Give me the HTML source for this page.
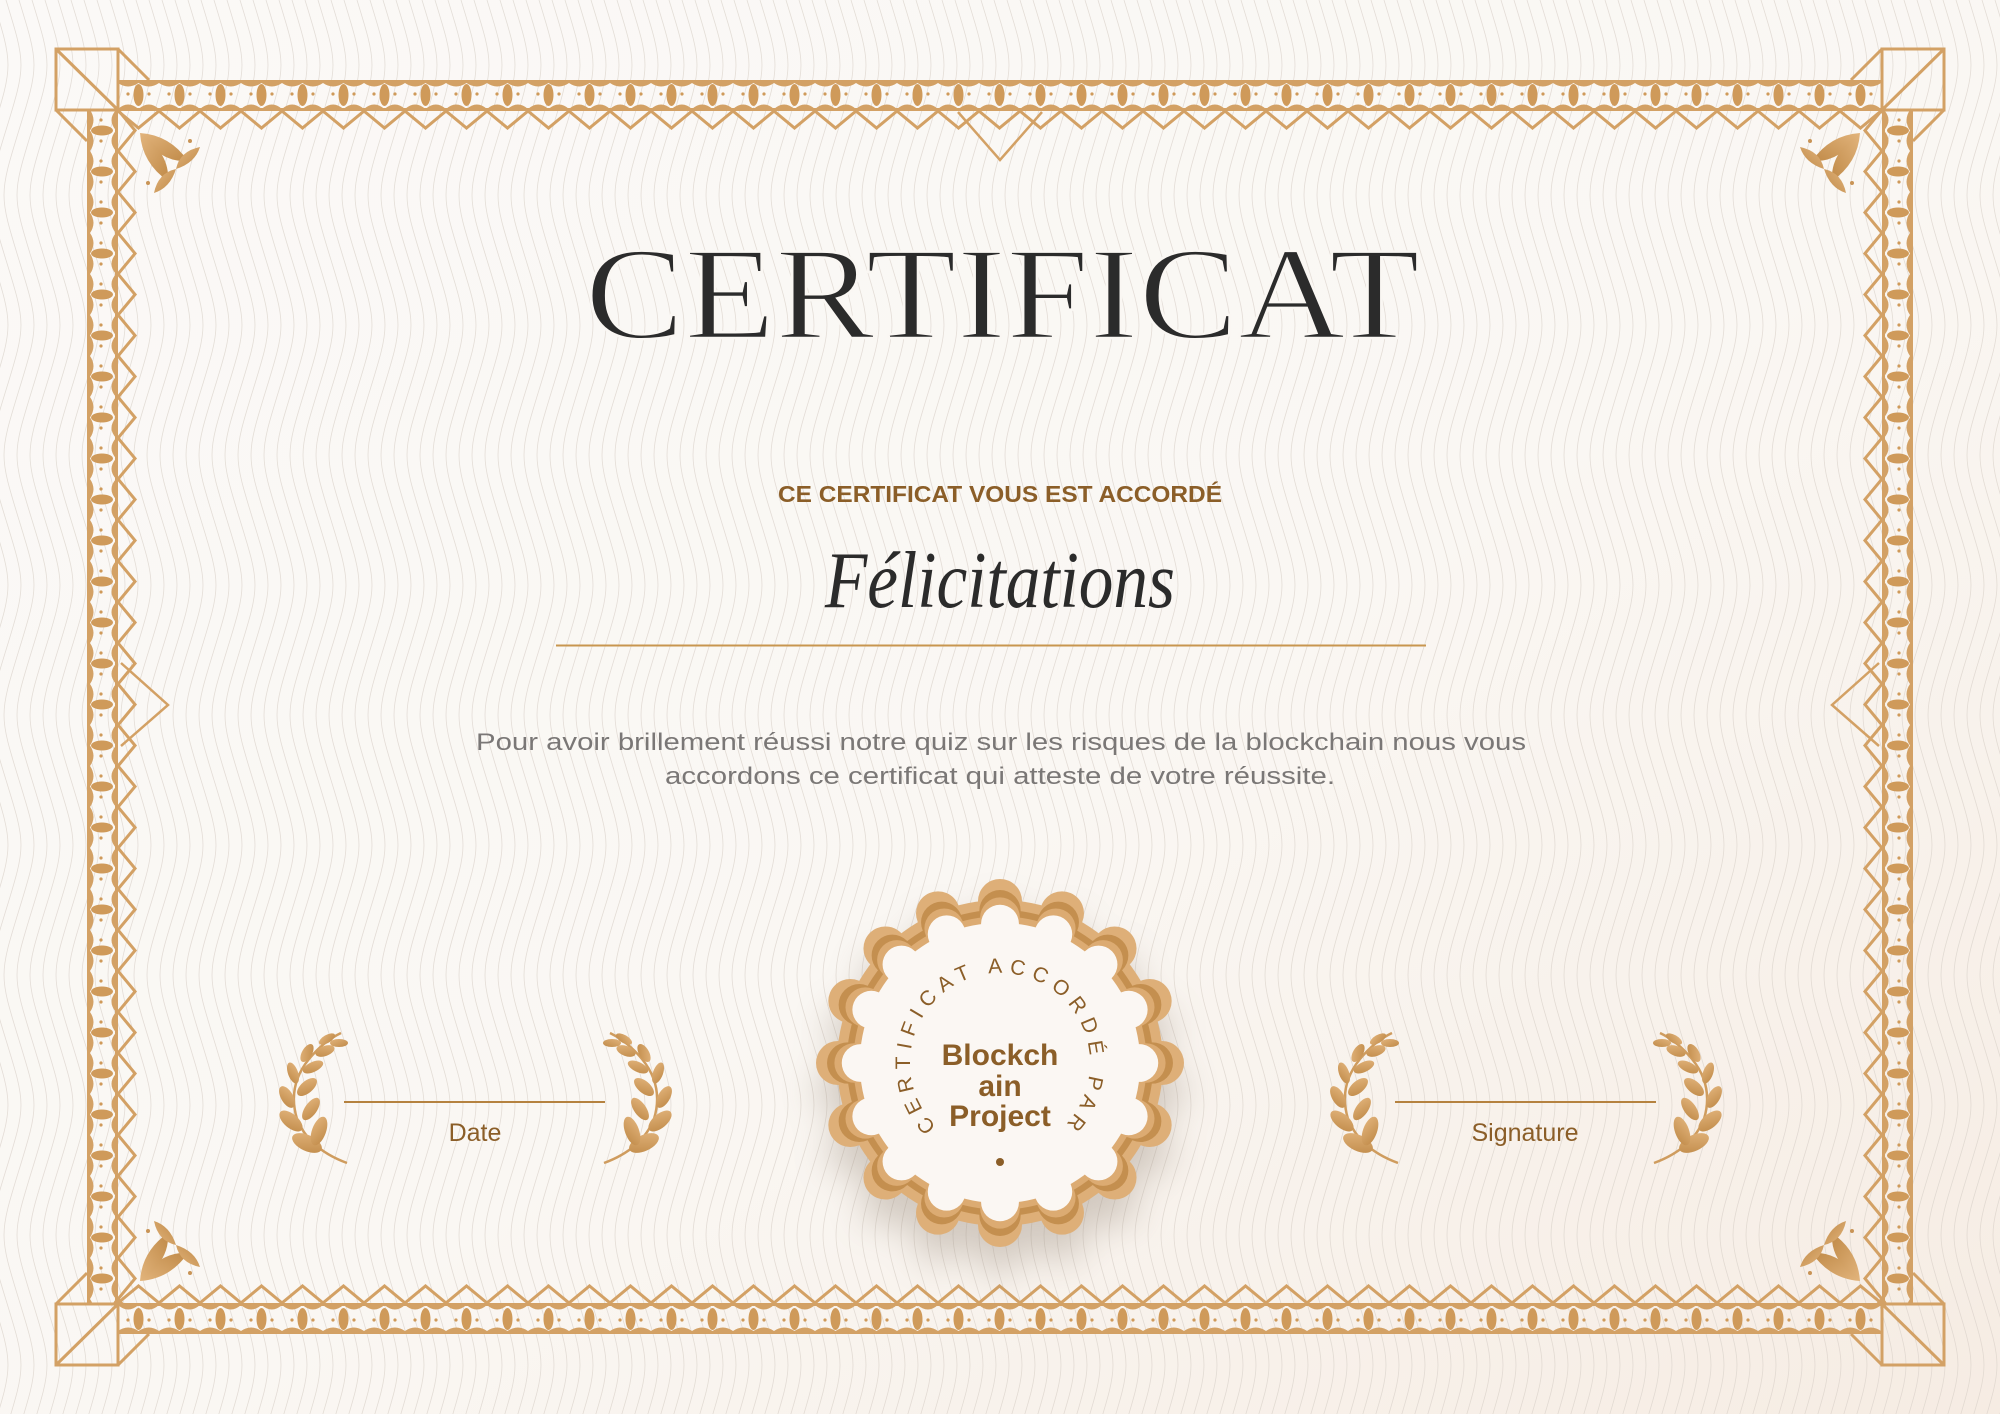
<!DOCTYPE html>
<html><head><meta charset="utf-8">
<style>
html,body{margin:0;padding:0;}
body{width:2000px;height:1414px;overflow:hidden;}
svg{display:block;}
</style></head>
<body>
<svg width="2000" height="1414" viewBox="0 0 2000 1414" xmlns="http://www.w3.org/2000/svg">
<defs>
  <linearGradient id="bg" x1="0" y1="0" x2="1" y2="1">
    <stop offset="0" stop-color="#fbf9f7"/>
    <stop offset="0.55" stop-color="#faf7f3"/>
    <stop offset="1" stop-color="#f6ece3"/>
  </linearGradient>
  <linearGradient id="gold" x1="0" y1="0" x2="1" y2="1">
    <stop offset="0" stop-color="#e2b47c"/>
    <stop offset="1" stop-color="#c08a48"/>
  </linearGradient>
  <pattern id="waves" x="0" y="0" width="13" height="260" patternUnits="userSpaceOnUse">
    <path d="M6,0 C26,65 26,65 6,130 C-14,195 -14,195 6,260" fill="none" stroke="#d9d1c9" stroke-width="0.8"/>
    <path d="M19,0 C39,65 39,65 19,130 C-1,195 -1,195 19,260" fill="none" stroke="#d9d1c9" stroke-width="0.8"/>
    <path d="M-7,0 C13,65 13,65 -7,130 C-27,195 -27,195 -7,260" fill="none" stroke="#d9d1c9" stroke-width="0.8"/>
  </pattern>
  <g id="bandtile">
    <line x1="0" y1="1.5" x2="41" y2="1.5" stroke="#d3a165" stroke-width="3"/>
    <path d="M0,3 Q10,10 20.5,3 Q31,10 41,3 Z" fill="#d3a165"/>
    <line x1="0" y1="29.5" x2="41" y2="29.5" stroke="#d3a165" stroke-width="3"/>
    <path d="M0,29 Q10,20 20.5,29 Q31,20 41,29 Z" fill="#d3a165"/>
    <ellipse cx="20.5" cy="15" rx="5" ry="11" fill="#cf9a5a"/>
    <circle cx="10" cy="14" r="1.6" fill="#cf9a5a"/>
    <circle cx="31" cy="14" r="1.6" fill="#cf9a5a"/>
    <polyline points="0,31 20.5,48 41,31" fill="none" stroke="#d3a165" stroke-width="3"/>
  </g>
  <pattern id="hb" x="0" y="0" width="41" height="50" patternUnits="userSpaceOnUse" patternTransform="translate(118,80)">
    <use href="#bandtile"/>
  </pattern>
  <pattern id="hbb" x="0" y="0" width="41" height="50" patternUnits="userSpaceOnUse" patternTransform="matrix(1,0,0,-1,118,1334)">
    <use href="#bandtile"/>
  </pattern>
  <pattern id="vbl" x="0" y="0" width="41" height="50" patternUnits="userSpaceOnUse" patternTransform="matrix(0,1,1,0,87,110)">
    <use href="#bandtile"/>
  </pattern>
  <pattern id="vbr" x="0" y="0" width="41" height="50" patternUnits="userSpaceOnUse" patternTransform="matrix(0,1,-1,0,1913,110)">
    <use href="#bandtile"/>
  </pattern>
  <g id="fan">
    <path d="M0,0 Q30,2 48,28 Q20,30 0,0 Z" fill="url(#gold)"/>
    <path d="M0,0 Q2,30 28,48 Q30,20 0,0 Z" fill="url(#gold)"/>
    <path d="M60,14 Q40,18 36,36 Q55,30 60,14 Z" fill="url(#gold)"/>
    <path d="M14,60 Q18,40 36,36 Q30,55 14,60 Z" fill="url(#gold)"/>
    <circle cx="50" cy="8" r="2" fill="#c99456"/><circle cx="8" cy="50" r="2" fill="#c99456"/>
  </g>
  <g id="laurel">
    <path d="M68,132 Q30,118 18,88 Q8,55 30,28 Q45,10 62,2" fill="none" stroke="#cf9c5e" stroke-width="2.5"/>
    <g fill="url(#gold)">
      <ellipse cx="28" cy="112" rx="16" ry="8" transform="rotate(25 28 112)"/>
      <ellipse cx="40" cy="100" rx="7" ry="15" transform="rotate(20 40 100)"/>
      <ellipse cx="12" cy="90" rx="14" ry="7" transform="rotate(40 12 90)"/>
      <ellipse cx="32" cy="78" rx="6" ry="13" transform="rotate(35 32 78)"/>
      <ellipse cx="8" cy="66" rx="12" ry="6" transform="rotate(60 8 66)"/>
      <ellipse cx="28" cy="56" rx="6" ry="12" transform="rotate(50 28 56)"/>
      <ellipse cx="14" cy="42" rx="11" ry="5" transform="rotate(70 14 42)"/>
      <ellipse cx="34" cy="36" rx="5" ry="11" transform="rotate(65 34 36)"/>
      <ellipse cx="28" cy="22" rx="10" ry="5" transform="rotate(-60 28 22)"/>
      <ellipse cx="46" cy="20" rx="5" ry="10" transform="rotate(70 46 20)"/>
      <ellipse cx="48" cy="8" rx="9" ry="4" transform="rotate(-30 48 8)"/>
      <ellipse cx="60" cy="12" rx="9" ry="4"/>
    </g>
  </g>
  <g id="bumps">
    <circle cx="0" cy="0" r="163"/>
    <circle cx="162" cy="0" r="22"/>
    <circle cx="162" cy="0" r="22" transform="rotate(22.5)"/>
    <circle cx="162" cy="0" r="22" transform="rotate(45)"/>
    <circle cx="162" cy="0" r="22" transform="rotate(67.5)"/>
    <circle cx="162" cy="0" r="22" transform="rotate(90)"/>
    <circle cx="162" cy="0" r="22" transform="rotate(112.5)"/>
    <circle cx="162" cy="0" r="22" transform="rotate(135)"/>
    <circle cx="162" cy="0" r="22" transform="rotate(157.5)"/>
    <circle cx="162" cy="0" r="22" transform="rotate(180)"/>
    <circle cx="162" cy="0" r="22" transform="rotate(202.5)"/>
    <circle cx="162" cy="0" r="22" transform="rotate(225)"/>
    <circle cx="162" cy="0" r="22" transform="rotate(247.5)"/>
    <circle cx="162" cy="0" r="22" transform="rotate(270)"/>
    <circle cx="162" cy="0" r="22" transform="rotate(292.5)"/>
    <circle cx="162" cy="0" r="22" transform="rotate(315)"/>
    <circle cx="162" cy="0" r="22" transform="rotate(337.5)"/>
  </g>
  <filter id="sh" x="-50%" y="-50%" width="200%" height="200%"><feGaussianBlur stdDeviation="18"/></filter>
  <path id="arc" d="M936.4,1126.6 A90,90 0 1 1 1063.6,1126.6"/>
</defs>

<rect width="2000" height="1414" fill="url(#bg)"/>
<rect width="2000" height="1414" fill="url(#waves)" opacity="0.7"/>

<rect x="118" y="80" width="1764" height="50" fill="url(#hb)"/>
<rect x="118" y="1284" width="1764" height="50" fill="url(#hbb)"/>
<rect x="87" y="110" width="50" height="1194" fill="url(#vbl)"/>
<rect x="1863" y="110" width="50" height="1194" fill="url(#vbr)"/>

<g fill="none" stroke="#d3a165" stroke-width="3">
  <rect x="56" y="49" width="62" height="61"/>
  <line x1="56" y1="49" x2="118" y2="110"/><line x1="118" y1="49" x2="149" y2="80"/><line x1="56" y1="110" x2="87" y2="141"/>
  <rect x="1882" y="49" width="62" height="61"/>
  <line x1="1944" y1="49" x2="1882" y2="110"/><line x1="1882" y1="49" x2="1851" y2="80"/><line x1="1944" y1="110" x2="1913" y2="141"/>
  <rect x="56" y="1304" width="62" height="61"/>
  <line x1="56" y1="1365" x2="118" y2="1304"/><line x1="118" y1="1365" x2="149" y2="1334"/><line x1="56" y1="1304" x2="87" y2="1273"/>
  <rect x="1882" y="1304" width="62" height="61"/>
  <line x1="1944" y1="1365" x2="1882" y2="1304"/><line x1="1882" y1="1365" x2="1851" y2="1334"/><line x1="1944" y1="1304" x2="1913" y2="1273"/>
  <polyline points="958,112 1000,160 1042,112" stroke-width="2.5"/>
  <polyline points="121,663 168,705 121,746" stroke-width="2.5"/>
  <polyline points="1879,663 1832,705 1879,746" stroke-width="2.5"/>
</g>
<use href="#fan" transform="translate(140,133)"/>
<use href="#fan" transform="translate(1860,133) scale(-1,1)"/>
<use href="#fan" transform="translate(140,1281) scale(1,-1)"/>
<use href="#fan" transform="translate(1860,1281) scale(-1,-1)"/>

<text x="585" y="338" font-family="Liberation Serif, serif" font-size="132" fill="#2b2b2b" stroke="#faf7f3" stroke-width="2.5" textLength="835" lengthAdjust="spacingAndGlyphs">CERTIFICAT</text>
<text x="1000" y="502" text-anchor="middle" font-family="Liberation Sans, sans-serif" font-weight="bold" font-size="23" fill="#8b5e28" textLength="444" lengthAdjust="spacingAndGlyphs">CE CERTIFICAT VOUS EST ACCORDÉ</text>
<text x="1000" y="607" text-anchor="middle" font-family="Liberation Serif, serif" font-style="italic" font-size="80" fill="#2b2b2b" textLength="350" lengthAdjust="spacingAndGlyphs">Félicitations</text>
<line x1="556" y1="645.5" x2="1426" y2="645.5" stroke="#c8964f" stroke-width="2"/>
<text x="1001" y="750" text-anchor="middle" font-family="Liberation Sans, sans-serif" font-size="24" fill="#7a7776" textLength="1050" lengthAdjust="spacingAndGlyphs">Pour avoir brillement réussi notre quiz sur les risques de la blockchain nous vous</text>
<text x="1000" y="784" text-anchor="middle" font-family="Liberation Sans, sans-serif" font-size="24" fill="#7a7776" textLength="670" lengthAdjust="spacingAndGlyphs">accordons ce certificat qui atteste de votre réussite.</text>

<line x1="344" y1="1102" x2="605" y2="1102" stroke="#b5823f" stroke-width="2"/>
<text x="475" y="1141" text-anchor="middle" font-family="Liberation Sans, sans-serif" font-size="25" fill="#8b5e28">Date</text>
<line x1="1395" y1="1102" x2="1656" y2="1102" stroke="#b5823f" stroke-width="2"/>
<text x="1525" y="1141" text-anchor="middle" font-family="Liberation Sans, sans-serif" font-size="25" fill="#8b5e28">Signature</text>
<use href="#laurel" transform="translate(279,1031)"/>
<use href="#laurel" transform="translate(672,1031) scale(-1,1)"/>
<use href="#laurel" transform="translate(1330,1031)"/>
<use href="#laurel" transform="translate(1722,1031) scale(-1,1)"/>

<g transform="translate(1000,1090)" opacity="0.35" filter="url(#sh)"><use href="#bumps" fill="#8a7a6a"/></g>
<g transform="translate(1000,1063)">
  <use href="#bumps" fill="#deaf78"/>
  <use href="#bumps" fill="#c48f4f" transform="scale(0.94)"/>
  <use href="#bumps" fill="#dcab72" transform="scale(0.9)"/>
  <use href="#bumps" fill="#fbf7f3" transform="scale(0.86)"/>
</g>
<text font-family="Liberation Sans, sans-serif" font-size="21" fill="#8b5e28"><textPath href="#arc" textLength="420" lengthAdjust="spacing">CERTIFICAT ACCORDÉ PAR</textPath></text>
<g font-family="Liberation Sans, sans-serif" font-weight="bold" font-size="30" fill="#8b5e28" text-anchor="middle">
  <text x="1000" y="1065">Blockch</text>
  <text x="1000" y="1096">ain</text>
  <text x="1000" y="1126">Project</text>
</g>
<circle cx="1000" cy="1162" r="4" fill="#8b5e28"/>
</svg>
</body></html>
